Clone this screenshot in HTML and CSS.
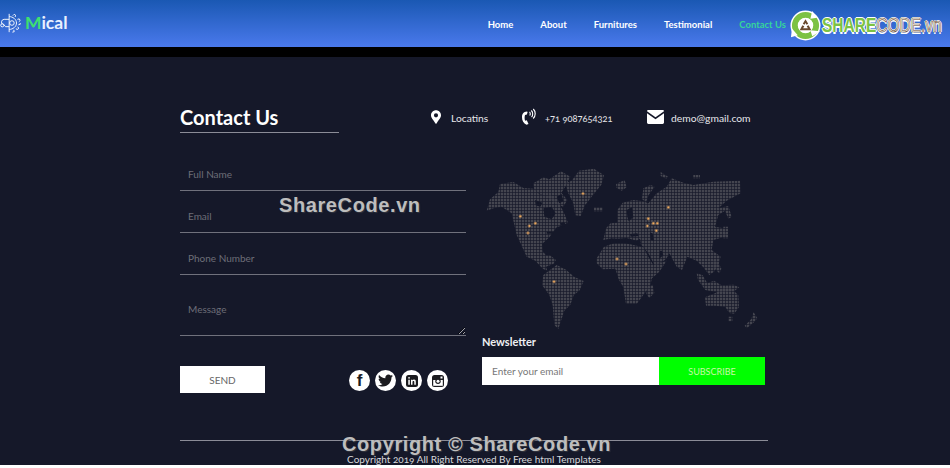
FILE: index.html
```html
<!DOCTYPE html>
<html lang="en">
<head>
<meta charset="utf-8">
<title>Mical - Contact Us</title>
<link rel="stylesheet" href="styles.css">
</head>
<body>
<div class="page">
<header class="topbar">
  <a class="brand" href="#">
    <svg class="brand-icon" viewBox="0 0 24 24" fill="none" stroke="#fff" stroke-width="1">
      <path d="M10 2v20M10 5c4 0 8 3 8 7s-4 7-8 7"/>
      <path d="M14 4l1.500-1.500 1.500 1-.5 2M19 8l2-.5 1 1.800-1.500 1.400M22 12v1.500l-2 .5M19 16l1.500 1.500-1.200 1.500-2-.6M15 19.500l.5 2-2 .5"/>
      <path d="M10 8H4.500a3 3 0 0 0-1.500 5.500M10 16H6l-2-2.500"/>
      <circle cx="2.500" cy="14.500" r="1.700"/>
      <circle cx="13" cy="12" r="2.500"/>
    </svg>
    <span class="brand-name"><span class="brand-accent">M</span>ical</span>
  </a>
  <nav class="nav">
    <a href="#">Home</a>
    <a href="#">About</a>
    <a href="#">Furnitures</a>
    <a href="#">Testimonial</a>
    <a class="active" href="#">Contact Us</a>
  </nav>
</header>
<div class="band"></div>

<main class="content">
  <section class="head-row">
    <h1 class="title">Contact Us</h1>
    <ul class="info">
      <li class="info-loc">
        <svg class="ic-pin" viewBox="0 0 384 512" fill="#fff"><path d="M172 502C27 291 0 269 0 192 0 86 86 0 192 0s192 86 192 192c0 77-27 99-172 310a24 24 0 0 1-40 0zm20-230a80 80 0 1 0 0-160 80 80 0 0 0 0 160z"/></svg>
        <span>Locatins</span>
      </li>
      <li class="info-tel">
        <svg class="ic-tel" viewBox="0 0 14 17" fill="#fff">
          <path d="M5 3.500C1.500 3.800 0 6 0 9.200c0 3.300 1.500 6.200 4.500 7.500l2-.8-1.700-3.600-1.700.5C2.500 11.300 2.400 8.800 3 7l1.900-.5.700-2.400z"/>
          <path d="M7.500 4c1 .8 1 2.500.2 3.500M9.300 2.500c1.800 1.500 1.800 4.800.3 6.600M11.300 1c2.600 2.500 2.500 7-.1 9.500" fill="none" stroke="#fff" stroke-width="1.100"/>
        </svg>
        <span class="tel-num">+71 9087654321</span>
      </li>
      <li class="info-mail">
        <svg class="ic-mail" viewBox="0 0 16 13" fill="#fff">
          <path d="M1.300 0h13.400c.7 0 1.300.5 1.300 1.200L8 6.800 0 1.200C0 .5.600 0 1.300 0z"/>
          <path d="M0 3l8 5.500L16 3v8.700c0 .7-.6 1.300-1.300 1.300H1.300C.6 13 0 12.400 0 11.700z"/>
        </svg>
        <span>demo@gmail.com</span>
      </li>
    </ul>
  </section>

  <section class="columns">
    <form class="contact-form">
      <input class="field" type="text" placeholder="Full Name">
      <input class="field" type="text" placeholder="Email">
      <input class="field" type="text" placeholder="Phone Number">
      <textarea class="field field-msg" placeholder="Message"></textarea>
      <div class="form-foot">
        <button class="send" type="button">SEND</button>
        <div class="social">
          <a class="soc soc-f" href="#">f</a>
          <a class="soc" href="#"><svg class="soc-tw" viewBox="0 0 512 512" fill="#1b1b1f"><path d="M459.370 151.716c.325 4.548.325 9.097.325 13.645 0 138.720-105.583 298.558-298.558 298.558-59.452 0-114.680-17.219-161.137-47.106 8.447.974 16.568 1.299 25.340 1.299 49.055 0 94.213-16.568 130.274-44.832-46.132-.975-84.792-31.188-98.112-72.772 6.498.974 12.995 1.624 19.818 1.624 9.421 0 18.843-1.300 27.614-3.573-48.081-9.747-84.143-51.980-84.143-102.985v-1.299c13.969 7.797 30.214 12.670 47.431 13.319-28.264-18.843-46.781-51.005-46.781-87.391 0-19.492 5.197-37.360 14.294-52.954 51.655 63.675 129.300 105.258 216.365 109.807-1.624-7.797-2.599-15.918-2.599-24.040 0-57.828 46.782-104.934 104.934-104.934 30.213 0 57.502 12.670 76.670 33.137 23.715-4.548 46.456-13.320 66.599-25.340-7.798 24.366-24.366 44.833-46.132 57.827 21.117-2.273 41.584-8.122 60.426-16.243-14.292 20.791-32.161 39.308-52.628 54.253z"/></svg></a>
          <a class="soc" href="#"><svg class="soc-gl" viewBox="0 0 14 14"><rect x="1" y="1" width="12" height="12" rx="2.500" fill="#1b1b1f"/><path d="M3.300 5.700h1.500v5H3.300zM3.200 3.800a.85.85 0 1 1 1.700 0 .85.85 0 0 1-1.700 0zM6 5.700h1.400v.7c.3-.5.900-.8 1.600-.8 1.400 0 1.800.9 1.800 2.200v2.900H9.300V8.100c0-.7-.2-1.200-.8-1.200-.7 0-1 .5-1 1.200v2.600H6z" fill="#fff"/></svg></a>
          <a class="soc" href="#"><svg class="soc-gl" viewBox="0 0 14 14"><rect x="1" y="1" width="12" height="12" rx="2.500" fill="#1b1b1f"/><rect x="2.200" y="6" width="9.600" height="5.800" fill="#fff"/><circle cx="7" cy="7.200" r="2.700" fill="#1b1b1f"/><circle cx="7" cy="7.200" r="1.500" fill="#fff"/><rect x="9.500" y="2.500" width="2" height="2" fill="#fff"/></svg></a>
        </div>
      </div>
    </form>

    <div class="side">
      <svg class="map" viewBox="0 0 870 540">
        <defs>
          <pattern id="dots" width="9" height="9" patternUnits="userSpaceOnUse">
            <rect width="7" height="7" fill="#44454f"/>
          </pattern>
        </defs>
        <g fill="url(#dots)">
          <path d="M20 152L30 118L55 96L60 72L100 66L130 84L160 86L178 102L200 110L212 104L240 136L252 158L264 188L252 194L230 202L208 232L186 252L188 274L198 286L210 286L228 300L220 312L198 320L202 332L188 326L166 302L140 290L110 225L95 160L65 140L40 145z"/>
          <path d="M275 62L297 32L342 26L372 46L364 74L336 109L314 137L302 168L286 166L280 130L265 100L255 70z"/>
          <path d="M160 70L190 52L208 58L243 34L271 50L256 80L244 98L262 120L250 140L228 132L206 114L181 102L163 90z"/>
          <path d="M342 142H368V154H342zM408 72L434 60L440 82L425 92L410 84z"/>
          <path d="M190 345L230 315L258 329L283 351L311 363L299 391L281 406L271 434L253 452L243 482L235 507L223 495L218 435L208 405L186 375z"/>
          <path d="M350 295L372 260L414 245L450 253L490 262L505 290L520 315L560 302L538 335L516 355L510 378L486 410L470 432L438 432L430 382L416 358L406 326L368 328L350 310z"/>
          <path d="M502 382L518 374L523 399L508 414L499 402z"/>
          <path d="M370 240L378 205L392 190L412 188L412 150L428 128L460 120L490 124L505 130L530 100L560 80L575 55L610 68L640 75L700 65L780 62L782 100L740 122L715 145L745 138L755 170L745 176L735 152L715 165L705 200L730 205L742 228L700 240L695 270L722 290L716 312L702 335L688 345L670 322L650 302L622 290L606 330L590 320L568 280L558 298L525 318L505 280L490 262L480 250L440 240L395 235z"/>
          <path d="M650 340L668 346L682 370L702 362L724 376L760 374L778 382L764 392L722 398L676 390L654 360z"/>
          <path d="M700 300L714 306L724 326L718 340L700 322z"/>
          <path d="M675 412L705 400L735 380L753 384L775 406L777 441L763 461L748 459L736 441L706 437L678 437z"/>
          <path d="M745 470H757V484H745zM820 455L832 475L822 487L800 505L794 497L812 479L818 467zM490 85L512 75L524 80L506 105L498 127L486 117zM640 45H660V55H640zM542 36L564 50L558 56L542 48zM730 200H744V235H730z"/>
        </g>
        <g fill="#151829">
          <path d="M190 145L215 140L227 160L215 178L193 170zM165 120L187 128L181 140L167 136zM240 190L252 186L258 194L248 202zM230 110L245 102L250 124L238 130zM200 215H220V221H200z"/>
          <path d="M390 238L440 234L470 242L480 236L483 250L393 250z"/>
          <path d="M450 222L472 220L476 228L452 230zM510 218L518 220L522 242L512 240zM440 150L456 142L460 172L446 184L442 170z"/>
          <path d="M540 272L546 272L550 286L538 296z"/>
        </g>
        <g fill="#eda85a" stroke="#7a6350" stroke-width="2.500">
          <circle cx="309" cy="101" r="4"/><circle cx="121" cy="169" r="4"/><circle cx="148" cy="198" r="4"/>
          <circle cx="166" cy="190" r="4"/><circle cx="144" cy="219" r="4"/><circle cx="565" cy="142" r="4"/>
          <circle cx="505" cy="176" r="4"/><circle cx="520" cy="190" r="4"/><circle cx="532" cy="190" r="4"/>
          <circle cx="502" cy="198" r="4"/><circle cx="529" cy="212" r="4"/><circle cx="411" cy="297" r="4"/>
          <circle cx="438" cy="312" r="4"/><circle cx="222" cy="365" r="4"/>
        </g>
      </svg>
      <h2 class="news-title">Newsletter</h2>
      <form class="news-form">
        <input class="news-input" type="text" placeholder="Enter your email">
        <button class="news-btn" type="button">SUBSCRIBE</button>
      </form>
    </div>
  </section>

  <footer class="foot">Copyright 2019 All Right Reserved By Free html Templates</footer>
</main>

<div class="mark mark-top">ShareCode.vn</div>
<div class="mark mark-bottom">Copyright © ShareCode.vn</div>
<div class="logo-mark">
  <svg class="logo-ring" viewBox="0 0 32 32">
    <circle cx="16" cy="16" r="15.500" fill="#fff"/>
    <circle cx="16" cy="16" r="11" fill="none" stroke="#7cc243" stroke-width="6"/>
    <path d="M23 1l5 7-7 1zM31 22l-8 5-2-6zM2 19l6 7-7 2z" fill="#fff"/>
    <circle cx="16" cy="16" r="7.500" fill="#fff"/>
    <path d="M16 9.500l2.800 4.700-1.800 1-1-1.800-1 1.800-1.800-1zM10 21l2.800-5.200 2 1-1.300 2H16v2.200zM22 21l-2.800-5.200-2 1 1.300 2H16v2.200z" fill="#6b4a2e"/>
  </svg>
  <span class="logo-text"><span class="logo-share">SHARE</span><span class="logo-code">CODE.vn</span></span>
</div>
</div>
</body>
</html>
```

FILE: styles.css
```css
* { box-sizing: border-box; }

html, body {
  margin: 0;
  padding: 0;
  height: 100%;
  overflow: hidden;
}

body {
  background: #fff;
  color: #fff;
  font-family: "Lato", "Open Sans", "Liberation Sans", sans-serif;
}

.page {
  position: relative;
  height: 465px;
  overflow: hidden;
  background: #151829;
}

a { color: inherit; text-decoration: none; }
ul { list-style: none; margin: 0; padding: 0; }
h1, h2 { margin: 0; }

.topbar {
  height: 47px;
  display: flex;
  align-items: center;
  justify-content: space-between;
  padding-right: 164px;
  background: linear-gradient(180deg, #1a58b3 0%, #4a79ec 100%);
}

.brand { display: flex; align-items: center; gap: 3px; margin-top: -1px; }
.brand-icon { width: 22px; height: 24px; }
.brand-name { font-size: 17.500px; font-weight: 700; line-height: 1; color: #e8f0ff; }
.brand-accent { color: #3ee06f; }

.nav { display: flex; gap: 27px; font-size: 9.500px; font-weight: 700; margin-top: 1px; }
.nav .active { color: #35d59a; }

.band { height: 10px; background: #000; }

.content {
  width: 588px;
  margin-left: 180px;
  display: flex;
  flex-direction: column;
}

.head-row {
  display: flex;
  align-items: flex-start;
  height: 92px;
  padding-top: 48px;
}

.title {
  width: 159px;
  height: 28px;
  border-bottom: 1px solid #8b8c97;
  font-size: 20px;
  font-weight: 700;
  line-height: 24px;
}

.info {
  display: flex;
  align-items: center;
  margin-left: 92px;
  height: 24px;
  font-size: 10.300px;
  color: #e6e6ea;
  margin-top: 1px;
  font-variant-numeric: oldstyle-nums;
}

.info li { display: flex; align-items: center; }
.info-loc { gap: 10px; width: 91px; }
.info-tel { gap: 9px; width: 125px; }
.info-mail { gap: 7px; }
.ic-pin { width: 10px; height: 14px; margin-top: -3px; }
.ic-tel { width: 14px; height: 17px; margin-top: -3px; }
.ic-mail { width: 17px; height: 14px; margin-top: -3px; }
.tel-num { font-size: 9.300px; }

.columns { display: flex; gap: 16px; }

.contact-form {
  width: 286px;
  display: flex;
  flex-direction: column;
}

.field {
  display: block;
  width: 100%;
  height: 42px;
  padding: 8px 8px 0;
  border: 0;
  border-bottom: 1px solid #70717c;
  border-radius: 0;
  background: transparent;
  color: #fff;
  font: 400 10px "Lato", sans-serif;
  outline: none;
}

.field::placeholder { color: #6d6e78; opacity: 1; }

.field-msg {
  height: 61px;
  padding-top: 28px;
  line-height: 12px;
}

.form-foot {
  display: flex;
  justify-content: space-between;
  align-items: center;
  margin-top: 30px;
  padding-right: 18px;
}

.send {
  width: 85px;
  height: 27px;
  border: 0;
  background: #fff;
  color: #666;
  font: 400 10px "Lato", sans-serif;
}

.social { display: flex; gap: 5px; margin-top: 2px; }

.soc {
  width: 21px;
  height: 21px;
  border-radius: 50%;
  background: #fff;
  color: #1b1b1f;
  display: flex;
  align-items: center;
  justify-content: center;
}

.soc-f { font: 700 17px/21px "Liberation Sans", sans-serif; }
.soc-tw { width: 15px; height: 15px; }
.soc-gl { width: 14px; height: 14px; }

.side {
  width: 286px;
  display: flex;
  flex-direction: column;
}

.map { width: 290px; height: 180px; display: block; flex: none; margin: 11px 0 0 -2px; }

.news-title {
  font-size: 11px;
  font-weight: 700;
  line-height: 14px;
  color: #f0f0f3;
  margin-top: -5px;
}

.news-form { display: flex; width: 283px; height: 28px; margin-top: 8px; }

.news-input {
  flex: 1;
  min-width: 0;
  border: 0;
  border-radius: 0;
  padding: 0 10px;
  background: #fff;
  font: 400 10px "Lato", sans-serif;
  outline: none;
}

.news-input::placeholder { color: #777; opacity: 1; }

.news-btn {
  width: 106px;
  border: 0;
  background: #00ff00;
  color: #c9f7a8;
  font: 400 9px "Lato", sans-serif;
}

.foot {
  margin-top: 47px;
  border-top: 1px solid #8b8c97;
  padding-top: 12px;
  line-height: 12px;
  font-size: 10px;
  text-align: center;
  color: #d8d8dc;
  font-variant-numeric: oldstyle-nums;
}

.mark {
  position: absolute;
  font-family: "Liberation Sans", sans-serif;
  font-weight: 700;
  color: #bdbdbd;
  text-shadow: 1px 1px 1px #33353f;
  letter-spacing: .6px;
  white-space: nowrap;
}

.mark-top { left: 279px; top: 194px; font-size: 20px; line-height: 23px; }
.mark-bottom { left: 342px; top: 433px; font-size: 20px; line-height: 23px; }

.logo-mark {
  position: absolute;
  left: 790px;
  top: 10px;
  display: flex;
  align-items: center;
  height: 30px;
}

.logo-ring { width: 31px; height: 31px; flex: none; }

.logo-text {
  font: 700 15.500px/1 "Liberation Sans", sans-serif;
  white-space: nowrap;
  margin-left: 1px;
  margin-top: 1px;
  transform: scaleY(1.250);
}

.logo-share {
  color: #7cc243;
  text-shadow: 1px 0 #fff, -1px 0 #fff, 0 1px #fff, 0 -1px #fff;
}

.logo-code {
  color: #f7f3ee;
  font-weight: 400;
  -webkit-text-stroke: .5px #6b4a2e;
  text-shadow: 1px 0 #fff, -1px 0 #fff, 0 1px #fff, 0 -1px #fff;
}
```
